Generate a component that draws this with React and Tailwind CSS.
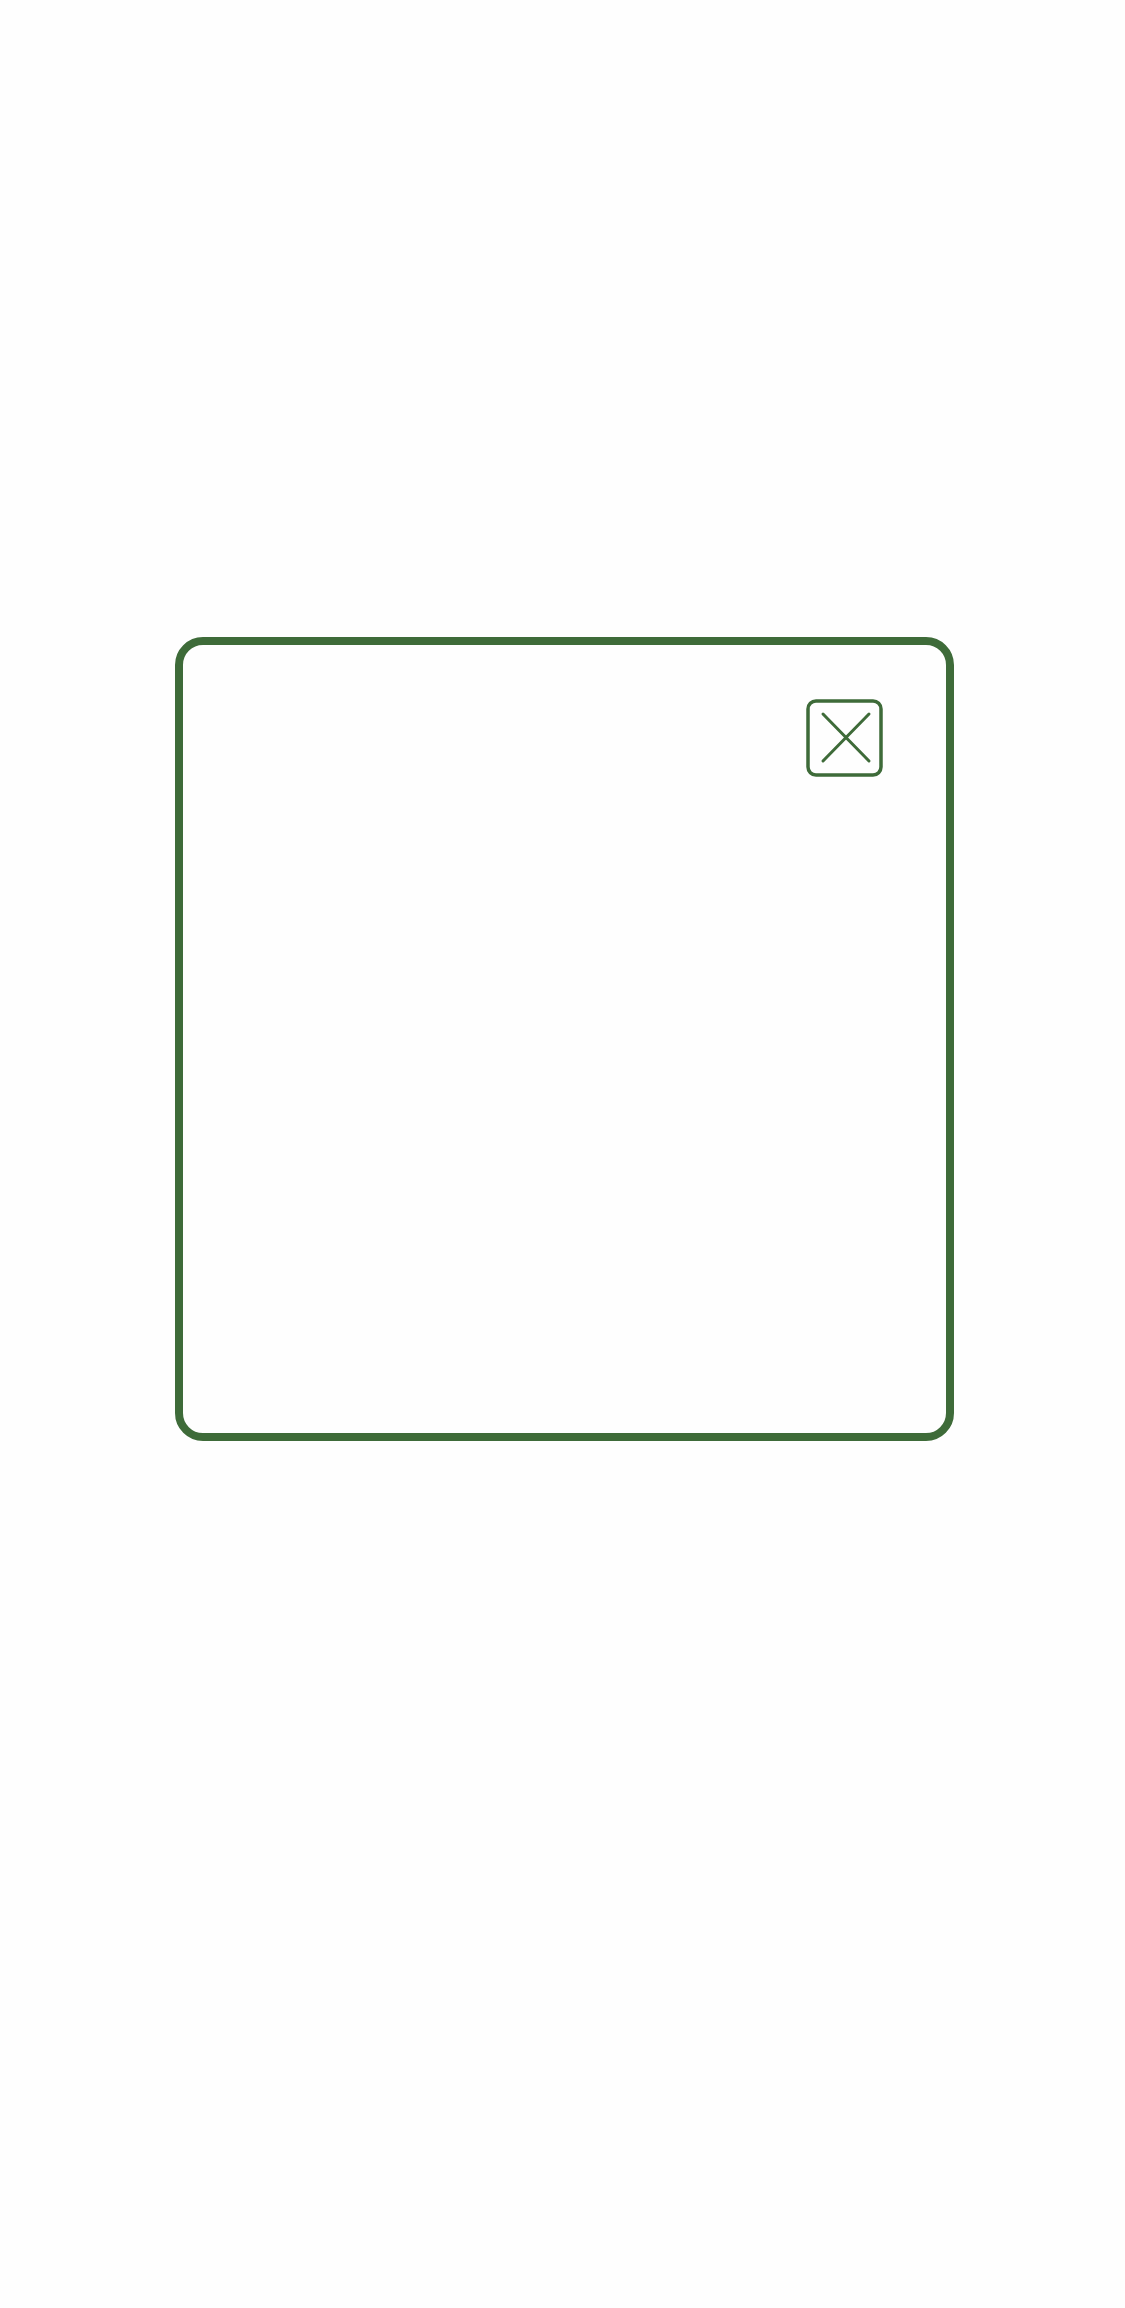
export default function App() {
  return (
    <div className="min-h-[2308px] w-full bg-[#fefefe] pt-[637px]" style={{ fontFamily: '"Liberation Sans", sans-serif' }}>
      <div className="ml-[175px] w-[779px] h-[804px] border-[8px] border-[#3e6b39] rounded-[28px] flex justify-end items-start pt-[54px] pr-[63px]">
        <button className="w-[77px] h-[78px] p-0">
          <svg width="77" height="78" viewBox="0 0 77 78" fill="none" stroke="#3e6b39" strokeLinecap="round">
            <rect x="2" y="2" width="73" height="74" rx="8" strokeWidth="3.5" />
            <line x1="17" y1="15" x2="63" y2="62" strokeWidth="3" />
            <line x1="63" y1="15" x2="17" y2="62" strokeWidth="3" />
          </svg>
        </button>
      </div>
    </div>
  );
}
